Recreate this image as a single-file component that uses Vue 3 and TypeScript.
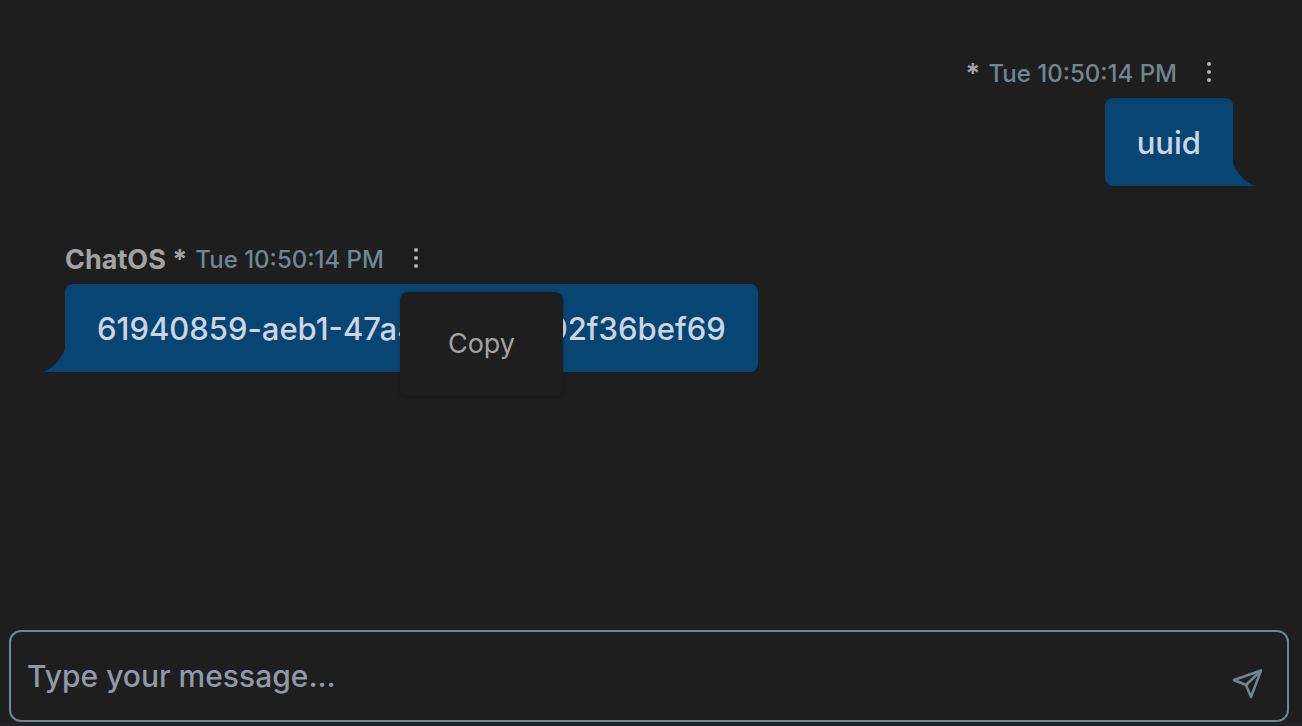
<script setup lang="ts">
import { ref } from 'vue'

interface Message {
  id: number
  author: string
  time: string
  text: string
  mine: boolean
}

const messages: Message[] = [
  { id: 1, author: '', time: 'Tue 10:50:14 PM', text: 'uuid', mine: true },
  {
    id: 2,
    author: 'ChatOS',
    time: 'Tue 10:50:14 PM',
    text: '61940859-aeb1-47a4-81c1-4992f36bef69',
    mine: false,
  },
]

const openMenu = ref<number | null>(2)
const draft = ref('')

function toggleMenu(id: number): void {
  openMenu.value = openMenu.value === id ? null : id
}

function copy(message: Message): void {
  navigator.clipboard?.writeText(message.text)
  openMenu.value = null
}

function send(): void {
  draft.value = ''
}
</script>

<template>
  <div class="chat">
    <main class="messages">
      <article
        v-for="message in messages"
        :key="message.id"
        class="message"
        :class="{ mine: message.mine }"
      >
        <header class="meta">
          <span class="author">{{ message.author }} *</span>
          <time class="time">{{ message.time }}</time>
          <div class="actions">
            <button
              class="dots"
              type="button"
              aria-label="Message options"
              :aria-expanded="openMenu === message.id"
              @click="toggleMenu(message.id)"
            >
              <svg viewBox="0 0 6 22" width="6" height="22" aria-hidden="true">
                <circle cx="3" cy="3" r="2" />
                <circle cx="3" cy="11" r="2" />
                <circle cx="3" cy="19" r="2" />
              </svg>
            </button>
            <div v-if="openMenu === message.id" class="menu">
              <button class="menu-item" type="button" @click="copy(message)">Copy</button>
            </div>
          </div>
        </header>
        <div class="bubble">
          {{ message.text }}
          <svg class="tail" viewBox="0 0 24 24" width="24" height="24" aria-hidden="true">
            <path d="M0 0C2 9 13 23 24 24H0Z" />
          </svg>
        </div>
      </article>
    </main>
    <form class="composer" @submit.prevent="send">
      <input
        v-model="draft"
        class="field"
        type="text"
        aria-label="Message"
        placeholder="Type your message..."
      />
      <button class="send" type="submit" aria-label="Send">
        <svg viewBox="0 0 32 32" width="32" height="32" aria-hidden="true">
          <path d="M30 2.5L3 12L15 17L20 29Z" />
          <path d="M30 2.5L15 17" />
        </svg>
      </button>
    </form>
  </div>
</template>

<style>
body {
  margin: 0;
  background: #222225;
}
</style>

<style scoped>
.chat {
  display: flex;
  flex-direction: column;
  box-sizing: border-box;
  min-height: 100vh;
  padding-bottom: 4px;
  background: linear-gradient(#1e1e1e, #1e1e1e) content-box;
  font-family: Inter, "Liberation Sans", sans-serif;
  color: #a3a3a3;
}

button {
  border: 0;
  padding: 0;
  background: none;
  color: inherit;
  font: inherit;
  cursor: pointer;
}

.messages {
  flex: 1;
  display: flex;
  flex-direction: column;
  gap: 58px;
  padding: 58px 69px 0 65px;
}

.message {
  display: flex;
  flex-direction: column;
  align-items: flex-start;
}

.message.mine {
  align-items: flex-end;
}

.meta {
  display: flex;
  align-items: center;
  gap: 8px;
  height: 32px;
  margin-bottom: 8px;
  line-height: 32px;
}

.mine .meta {
  padding-right: 13px;
}

.author {
  font-size: 27px;
  font-weight: 700;
}

.time {
  color: #6f8791;
  font-size: 24px;
  font-weight: 500;
}

.actions {
  position: relative;
  display: flex;
  margin-left: 13px;
  padding-bottom: 4px;
}

.dots {
  display: flex;
  justify-content: center;
  width: 22px;
  fill: #b4b4b4;
}

.menu {
  position: absolute;
  z-index: 1;
  top: 45px;
  left: -5px;
  padding: 24px 16px;
  border-radius: 8px;
  background: #1e1e1e;
  box-shadow: 0 1px 4px rgba(0, 0, 0, 0.2);
}

.menu-item {
  padding: 12px 32px;
  font-size: 27px;
  line-height: 32px;
}

.bubble {
  position: relative;
  padding: 21px 32px 19px;
  border-radius: 8px;
  border-bottom-left-radius: 0;
  background: #084573;
  color: #cdd5e3;
  font-size: 31px;
  font-weight: 500;
  line-height: 48px;
}

.mine .bubble {
  border-bottom-left-radius: 8px;
  border-bottom-right-radius: 0;
}

.tail {
  position: absolute;
  right: 100%;
  bottom: 0;
  fill: #084573;
  transform: scaleX(-1);
}

.mine .tail {
  right: auto;
  left: 100%;
  transform: none;
}

.composer {
  display: flex;
  align-items: center;
  margin: 0 13px 0 9px;
  padding: 0 24px 0 16px;
  border: 2px solid #6f8791;
  border-radius: 12px;
}

.field {
  flex: 1;
  min-width: 0;
  height: 88px;
  padding: 0;
  border: 0;
  outline: 0;
  background: none;
  color: #cdd5e3;
  font: inherit;
  font-size: 30px;
  font-weight: 500;
}

.field::placeholder {
  color: #9099a8;
  opacity: 1;
}

.send {
  display: flex;
  margin-top: 16px;
  fill: none;
  stroke: #6f8791;
  stroke-width: 2.5;
  stroke-linejoin: round;
}
</style>
